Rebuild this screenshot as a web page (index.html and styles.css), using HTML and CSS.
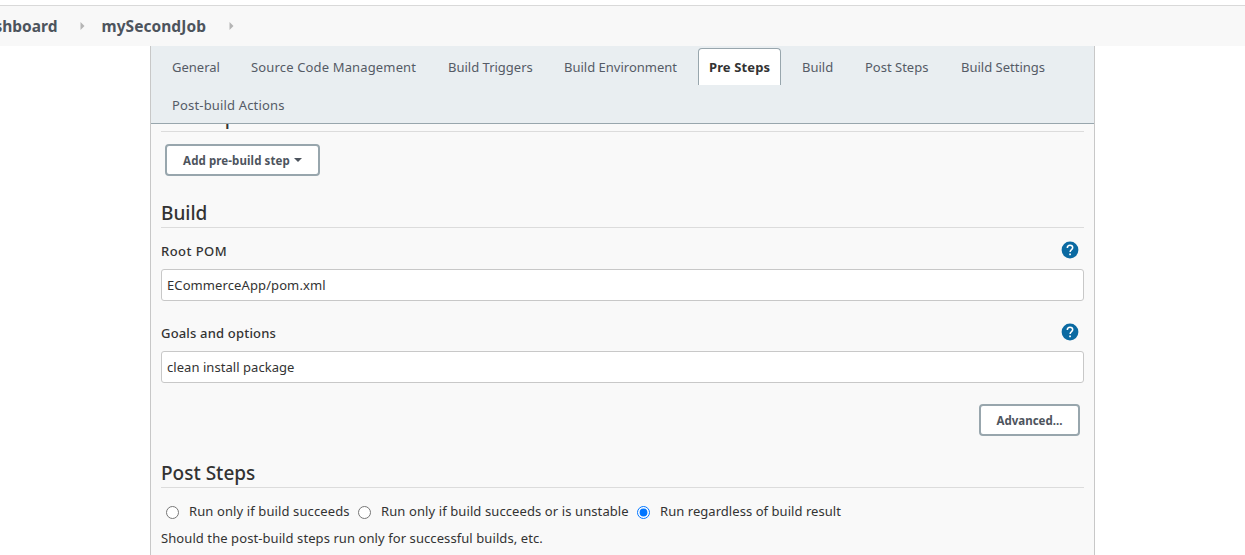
FILE: index.html
```html
<!DOCTYPE html>
<html lang="en">
<head>
<meta charset="utf-8">
<title>mySecondJob Config</title>
<link rel="stylesheet" href="styles.css">
</head>
<body>
<nav class="breadcrumbs">
  <span class="crumb crumb-first">Dashboard</span>
  <svg class="crumb-arrow" viewBox="0 0 5 8"><path d="M0.5 0 4.5 4 0.5 8z"/></svg>
  <span class="crumb crumb-job">mySecondJob</span>
  <svg class="crumb-arrow" viewBox="0 0 5 8"><path d="M0.5 0 4.5 4 0.5 8z"/></svg>
</nav>
<main class="panel">
  <div class="tabs">
    <div class="tab w-general">General</div>
    <div class="tab w-scm">Source Code Management</div>
    <div class="tab w-triggers">Build Triggers</div>
    <div class="tab w-env">Build Environment</div>
    <div class="tab tab-active">Pre Steps</div>
    <div class="tab w-build">Build</div>
    <div class="tab w-post">Post Steps</div>
    <div class="tab w-settings">Build Settings</div>
    <div class="tab w-actions">Post-build Actions</div>
  </div>
  <section class="content">
    <div class="clipped"><h2 class="heading">Pre Steps</h2></div>
    <button class="button add">Add pre-build step<svg class="caret" viewBox="0 0 8 4"><path d="M0 0h8L4 4z"/></svg></button>
    <h2 class="heading build-heading">Build</h2>
    <div class="field">
      <div class="label-row"><label class="label pom" for="pom">Root POM</label>
        <svg class="help" viewBox="0 0 18 18"><circle cx="9" cy="9" r="8.4"/><path d="M6.3 7C6.3 5.300 7.400 4.200 9 4.200s2.700 1 2.700 2.500C11.700 8.600 9.100 8.700 9.100 11"/><rect x="8.200" y="12.500" width="1.700" height="1.700"/></svg></div>
      <input class="input pom-input" id="pom" type="text" value="ECommerceApp/pom.xml">
    </div>
    <div class="field goals-field">
      <div class="label-row"><label class="label goals" for="goals">Goals and options</label>
        <svg class="help" viewBox="0 0 18 18"><circle cx="9" cy="9" r="8.4"/><path d="M6.3 7C6.3 5.300 7.400 4.200 9 4.200s2.700 1 2.700 2.500C11.700 8.600 9.100 8.700 9.100 11"/><rect x="8.200" y="12.500" width="1.700" height="1.700"/></svg></div>
      <input class="input goals-input" id="goals" type="text" value="clean install package">
    </div>
    <button class="button advanced">Advanced...</button>
    <h2 class="heading post-heading">Post Steps</h2>
    <div class="radios">
      <label class="radio r1"><input type="radio" name="run"><span>Run only if build succeeds</span></label>
      <label class="radio r2"><input type="radio" name="run"><span>Run only if build succeeds or is unstable</span></label>
      <label class="radio r3"><input type="radio" name="run" checked><span>Run regardless of build result</span></label>
    </div>
    <p class="note">Should the post-build steps run only for successful builds, etc.</p>
  </section>
</main>
</body>
</html>
```
FILE: styles.css
```css
* { box-sizing: border-box; }
body {
  margin: 0;
  height: 555px;
  overflow: hidden;
  background: #fff;
  color: #333;
  font-family: "Noto Sans", "Open Sans", sans-serif;
  font-size: 13px;
}
.breadcrumbs {
  display: flex;
  align-items: center;
  height: 41px;
  margin-top: 5px;
  border-top: 1px solid #d9d9d9;
  background: #f8f8f8;
  color: #4d545d;
  font-size: 15.5px;
  font-weight: 700;
  white-space: nowrap;
}
.crumb-first { width: 80px; display: flex; justify-content: flex-end; padding-right: 22.5px; }
.crumb-job { width: 144px; padding-left: 16.5px; letter-spacing: 0.05px; }
.crumb-arrow { width: 5px; height: 8px; flex: none; fill: #b5b5b5; }
.panel {
  width: 945px;
  height: 520px;
  margin-left: 150px;
  border: solid #c8c8c8;
  border-width: 0 1px;
  background: #f9f9f9;
}
.tabs {
  display: flex;
  flex-wrap: wrap;
  align-content: flex-start;
  column-gap: 10px;
  row-gap: 1px;
  height: 78px;
  padding: 2px 10px 0;
  border-bottom: 1px solid #98a6ad;
  background: #e9eef1;
  color: #555b66;
}
.tab {
  height: 37px;
  padding: 0 10px;
  border: 1px solid transparent;
  border-bottom: 0;
  line-height: 37px;
  white-space: nowrap;
}
.w-general { width: 69px; }
.w-scm { width: 187px; letter-spacing: 0.15px; }
.w-triggers { width: 106px; }
.w-env { width: 135px; }
.w-build { width: 53px; }
.w-post { width: 86px; }
.w-settings { width: 106px; }
.w-actions { letter-spacing: 0.16px; }
.tab-active {
  width: 83px;
  border-color: #98a6ad;
  border-radius: 4px 4px 0 0;
  background: #fff;
  color: #333;
  font-weight: 700;
  letter-spacing: 0.12px;
}
.content { padding: 0 10px; }
.clipped { display: flex; align-items: flex-end; height: 8px; overflow: hidden; }
.heading {
  flex: 1;
  height: 30px;
  margin: 0;
  border-bottom: 1px solid #dcdcdc;
  font-size: 19px;
  font-weight: 500;
  line-height: 30px;
}
.button {
  display: flex;
  align-items: center;
  justify-content: center;
  height: 32px;
  padding: 0;
  border: 2px solid #98a6ad;
  border-radius: 4px;
  background: #fff;
  color: #4d545d;
  font: 700 11.5px "Noto Sans", sans-serif;
  white-space: nowrap;
}
.add { width: 155px; margin: 12px 0 0 4px; letter-spacing: 0.1px; }
.caret { width: 8px; height: 4px; margin: -1px 0 0 4px; fill: currentColor; }
.build-heading { margin-top: 22px; }
.field { padding-top: 12px; }
.label-row {
  display: flex;
  align-items: center;
  justify-content: space-between;
  height: 22px;
  padding-right: 5px;
}
.label { font-weight: 500; }
.pom { letter-spacing: 0.45px; }
.goals { letter-spacing: 0.18px; }
.help { width: 18px; height: 18px; margin-bottom: 2px; fill: none; stroke: #fff; stroke-width: 1.5; }
.help circle { fill: #0b6aa2; stroke: none; }
.help rect { fill: #fff; stroke: none; }
.input {
  display: block;
  width: 923px;
  height: 32px;
  margin-top: 7px;
  padding: 0 5px;
  border: 1px solid #c8c8c8;
  border-radius: 3px;
  background: #fff;
  color: #333;
  font: 13px "Noto Sans", sans-serif;
}
.pom-input { letter-spacing: 0.1px; }
.goals-input { letter-spacing: 0.05px; }
.goals-field { padding-top: 21px; }
.advanced { width: 101px; margin: 21px 4px 0 auto; }
.post-heading { margin-top: 22px; }
.radios { display: flex; height: 20px; margin-top: 13px; padding-left: 5px; }
.radio { display: flex; align-items: center; white-space: nowrap; }
.radio input { width: 13px; height: 13px; margin: 3px 10px 0 0; }
.r1 { width: 192px; letter-spacing: 0.11px; }
.r2 { width: 279px; letter-spacing: 0.1px; }
.r3 { letter-spacing: 0.05px; }
.note { margin: 8px 0 0; line-height: 18px; letter-spacing: 0.08px; }
```
